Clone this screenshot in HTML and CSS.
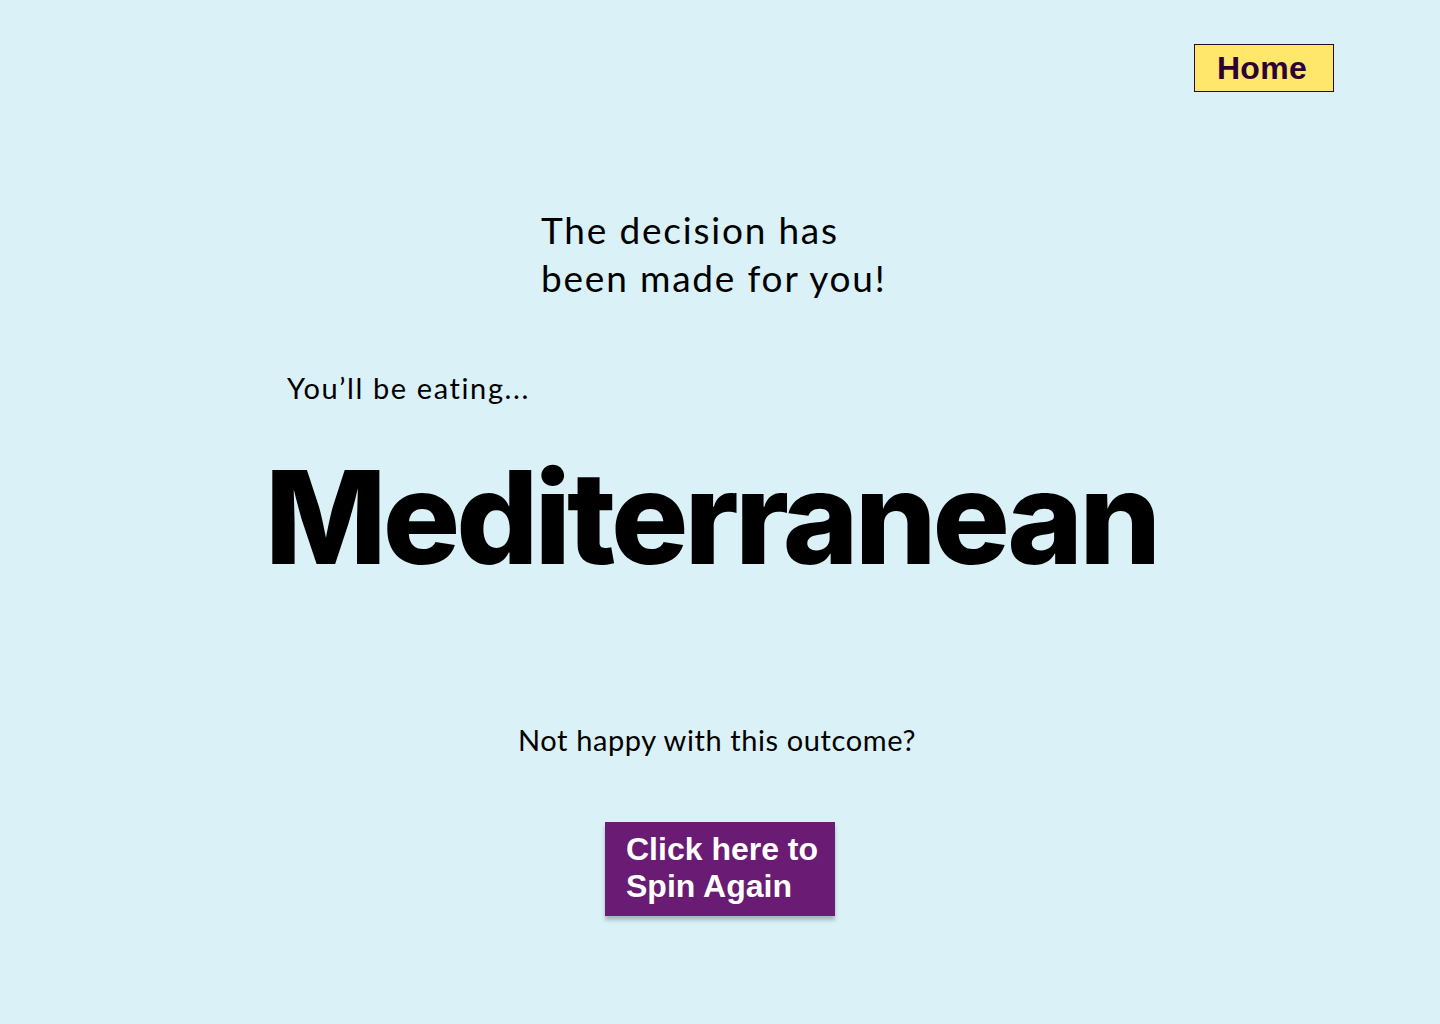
FILE: index.html
```html
<!DOCTYPE html>
<html lang="en">
<head>
<meta charset="utf-8">
<title>Decision</title>
<link rel="stylesheet" href="styles.css">
</head>
<body>
<div class="page">
  <header class="topbar">
    <a class="home-btn" href="#">Home</a>
  </header>
  <main class="content">
    <h1 class="decision">The decision has<br>been made for you!</h1>
    <p class="eating">You’ll be eating...</p>
    <h2 class="cuisine">Mediterranean</h2>
    <p class="unhappy">Not happy with this outcome?</p>
    <a class="spin-btn" href="#">Click here to<br>Spin Again</a>
  </main>
</div>
</body>
</html>
```
FILE: styles.css
```css
html, body {
  margin: 0;
  padding: 0;
  background: #daf2f7;
}
body {
  font-family: "Lato", "Open Sans", sans-serif;
  color: #000;
}
.page {
  width: 1440px;
  height: 1024px;
  display: flex;
  flex-direction: column;
}
.topbar {
  display: flex;
  justify-content: flex-end;
  padding: 44px 106px 0 0;
}
.home-btn {
  box-sizing: border-box;
  width: 140px;
  height: 48px;
  display: flex;
  align-items: center;
  justify-content: center;
  padding-right: 4px;
  background: #ffe76b;
  border: 1px solid #2a0a2c;
  color: #2d0035;
  font-family: "Liberation Sans", Arial, sans-serif;
  font-weight: 700;
  font-size: 32px;
  letter-spacing: 0.3px;
  text-decoration: none;
}
.content {
  display: flex;
  flex-direction: column;
}
.decision {
  margin: 114px 0 0 541px;
  font-weight: 400;
  font-size: 37px;
  line-height: 48px;
  letter-spacing: 1.8px;
}
.eating {
  margin: 68px 0 0 287px;
  font-size: 29px;
  line-height: 36px;
  letter-spacing: 1.6px;
}
.cuisine {
  margin: 36px 0 0 265px;
  font-family: "Inter", "Lato", sans-serif;
  font-weight: 800;
  font-size: 129px;
  line-height: 150px;
  letter-spacing: -4px;
}
.unhappy {
  margin: 130px 0 0 0;
  padding-right: 6px;
  text-align: center;
  font-size: 29px;
  line-height: 36px;
  letter-spacing: 0.6px;
}
.spin-btn {
  box-sizing: border-box;
  align-self: flex-start;
  margin: 64px 0 0 605px;
  width: 230px;
  height: 94px;
  padding: 9px 0 0 21px;
  background: #6a1b73;
  color: #fff;
  font-family: "Liberation Sans", Arial, sans-serif;
  font-weight: 700;
  font-size: 32px;
  line-height: 37px;
  text-decoration: none;
  box-shadow: 0 4px 4px rgba(0, 0, 0, 0.25);
}
```
